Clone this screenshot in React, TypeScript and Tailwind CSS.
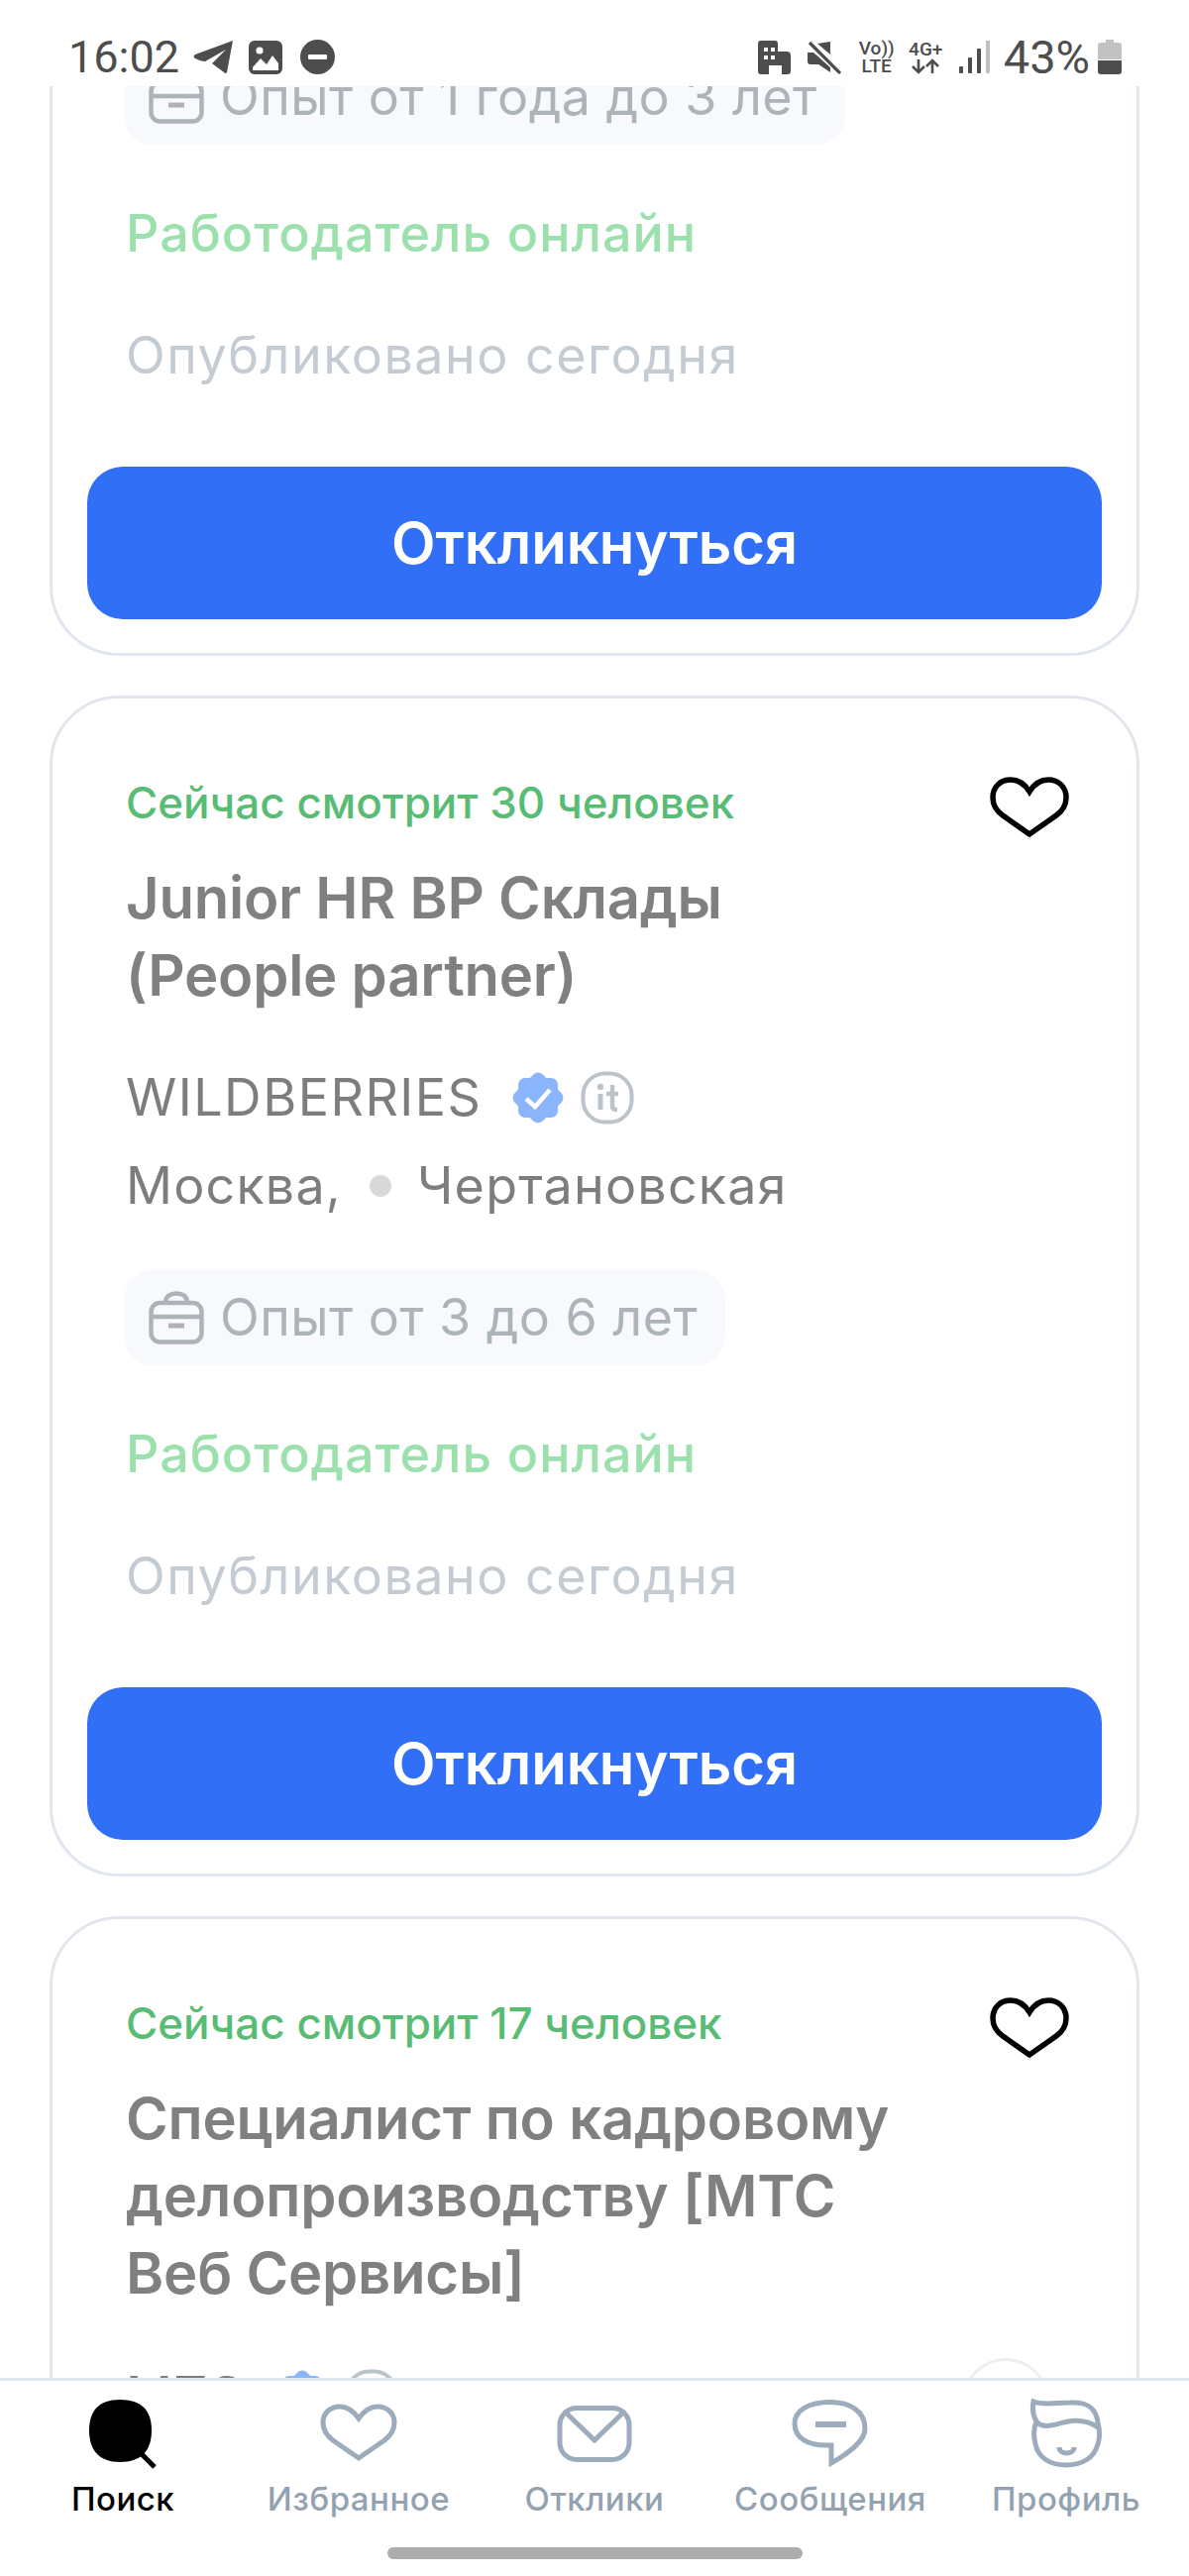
import React from "react";

const FONT = { fontFamily: "Inter, 'Noto Sans', sans-serif" };

function CardHeart() {
  return (
    <svg viewBox="0 0 80 72" className="absolute top-[73px] right-[68px] w-[80px] h-[72px]" fill="none" stroke="#000" strokeWidth="5.5" strokeLinejoin="miter">
      <path d="M40 64 L13 45 C6 40 3 34 3 27 C3 16 11 9 21 9 C29 9 35 13 40 21 C45 13 51 9 59 9 C69 9 77 16 77 27 C77 34 74 40 67 45 Z" />
    </svg>
  );
}

function Verified() {
  return (
    <svg viewBox="0 0 58 58" className="w-[58px] h-[58px] shrink-0">
      <g fill="#8ab4fb">
        <rect x="9" y="9" width="40" height="40" rx="7" />
        <rect x="9" y="9" width="40" height="40" rx="7" transform="rotate(45 29 29)" />
      </g>
      <path d="M17 30 L26 38 L41 21" fill="none" stroke="#fff" strokeWidth="4.5" />
    </svg>
  );
}

function ItBadge() {
  return (
    <svg viewBox="0 0 54 54" className="w-[54px] h-[54px] shrink-0" fill="none">
      <rect x="2.5" y="2.5" width="49" height="49" rx="22" stroke="#bcc3c9" strokeWidth="4" />
      <circle cx="20" cy="16" r="3.2" fill="#bcc3c9" />
      <path d="M20 23 V39" stroke="#bcc3c9" strokeWidth="5" />
      <path d="M32 14 V36 Q32 39 37 39 M26 23 H38" stroke="#bcc3c9" strokeWidth="4.5" />
    </svg>
  );
}

function Bag() {
  return (
    <svg viewBox="0 0 56 54" className="w-[56px] h-[54px] shrink-0" fill="none" stroke="#adb4b9" strokeWidth="4.5">
      <rect x="2.5" y="12" width="51" height="39.5" rx="9" />
      <path d="M3 26 H53" />
      <path d="M17 12 C17 5 22 2.5 28 2.5 C34 2.5 39 5 39 12" />
      <path d="M20 35 H36" strokeWidth="5" />
    </svg>
  );
}

function CompanyRow({ company, logo }: { company: string; logo?: boolean }) {
  return (
    <div className="relative mt-[41px] h-[88px] flex items-center text-[#7d7d7d] text-[52px] tracking-[1.5px]">
      <span>{company}</span>
      <span className="ml-[28px]"><Verified /></span>
      <span className="ml-[14px]"><ItBadge /></span>
      {logo && <div className="absolute right-[14px] top-[6px] w-[88px] h-[88px] rounded-full border-[3px] border-[#eeeeee]" />}
    </div>
  );
}

function Tail({ exp }: { exp: string }) {
  return (
    <>
      <div className="px-[39px]">
        <div className="-ml-[2px] inline-flex items-center h-[96px] pl-[25px] pr-[28px] rounded-[30px] bg-[#f7f9fd] text-[#adb4b9] text-[52px] tracking-[0.45px] gap-[16px]">
          <Bag />
          <span>{exp}</span>
        </div>
        <div className="mt-[55px] h-[70px] flex items-center text-[#9ce0ae] text-[52px] font-medium tracking-[1px]">Работодатель онлайн</div>
        <div className="mt-[53px] h-[70px] flex items-center text-[#c5cbd2] text-[52px] tracking-[1.5px]">Опубликовано сегодня</div>
      </div>
      <button className="mt-[77px] w-full h-[154px] rounded-[36px] bg-[#316ff6] text-white text-[58px] font-semibold">Откликнуться</button>
    </>
  );
}

function Head({ viewers, title }: { viewers: string; title: string[] }) {
  return (
    <>
      <CardHeart />
      <div className="h-[60px] flex items-center text-[#59bc74] text-[44px] font-medium">{viewers}</div>
      <div className="mt-[27px] text-[#808080] text-[58px] leading-[78px] font-semibold tracking-[-0.2px]">
        {title.map((t) => (
          <div key={t} className="whitespace-nowrap">{t}</div>
        ))}
      </div>
    </>
  );
}

function StatusBar() {
  return (
    <div className="h-[87px] shrink-0 bg-white flex items-start justify-between pl-[69px] pr-[68px] pt-[40px] text-[#4d4d4d]">
      <div className="flex items-center h-[35px]">
        <span className="text-[45px] leading-none" style={{ fontFamily: "Roboto, sans-serif" }}>16:02</span>
        <svg viewBox="0 0 40 35" className="ml-[14px] w-[40px] h-[35px]" fill="#4d4d4d">
          <path d="M40 1 L34 33 Q33 35 31 33 L19 24 L33 10 L12 22 Q8 22 2 19 Q-1 17 2 15 Z" />
        </svg>
        <svg viewBox="0 0 34 34" className="ml-[16px] w-[34px] h-[34px]">
          <rect width="34" height="34" rx="6" fill="#4d4d4d" />
          <circle cx="11" cy="10" r="3.6" fill="#fff" />
          <path d="M4 27 L12 18 L18 24 L24 15 L30 23 V30 H4 Z" fill="#fff" />
        </svg>
        <svg viewBox="0 0 35 35" className="ml-[18px] w-[35px] h-[35px]">
          <circle cx="17.5" cy="17.5" r="17.5" fill="#4d4d4d" />
          <rect x="8" y="15" width="19" height="5" rx="1" fill="#fff" />
        </svg>
      </div>
      <div className="flex items-center h-[35px]">
        <svg viewBox="0 0 33 34" className="w-[33px] h-[34px]" fill="#4d4d4d">
          <path d="M3 0 H17 Q20 0 20 3 V11 H29 Q33 11 33 15 V31 Q33 34 30 34 H24 V25 H11 V34 H3 Q0 34 0 31 V3 Q0 0 3 0 Z" />
          <g fill="#fff">
            <rect x="6" y="7" width="4" height="4" />
            <rect x="13" y="7" width="4" height="4" />
            <rect x="6" y="15" width="4" height="4" />
            <rect x="13" y="15" width="4" height="4" />
          </g>
        </svg>
        <svg viewBox="0 0 34 34" className="ml-[17px] w-[34px] h-[34px]" fill="#4d4d4d">
          <path d="M23 1 V14 L10 3 Z" />
          <path d="M0 12 H6 L23 27 V32 L11 24 H3 Q0 24 0 21 Z" />
          <path d="M2 2 L33 33" stroke="#4d4d4d" strokeWidth="3.2" />
        </svg>
        <div className="ml-[19px] w-[34px] flex flex-col items-center text-[19px] leading-[18px] font-medium" style={{ fontFamily: "Roboto, sans-serif" }}>
          <span>Vo))</span>
          <span>LTE</span>
        </div>
        <div className="ml-[14px] w-[37px] flex flex-col items-center">
          <span className="text-[19px] leading-[18px] font-medium" style={{ fontFamily: "Roboto, sans-serif" }}>4G+</span>
          <svg viewBox="0 0 32 16" className="w-[32px] h-[16px]" fill="none" stroke="#4d4d4d" strokeWidth="2.6">
            <path d="M9 1 V14 M3 8 L9 14 L15 8" />
            <path d="M23 15 V2 M17 8 L23 2 L29 8" />
          </svg>
        </div>
        <svg viewBox="0 0 32 34" className="ml-[14px] w-[32px] h-[34px]">
          <rect x="1" y="26" width="4" height="7" rx="1" fill="#4d4d4d" />
          <rect x="10" y="17" width="4" height="16" rx="1" fill="#4d4d4d" />
          <rect x="19" y="8" width="4" height="25" rx="1" fill="#4d4d4d" />
          <rect x="28" y="0" width="4" height="33" rx="1" fill="#bfbfbf" />
        </svg>
        <span className="ml-[14px] text-[47px] leading-none" style={{ fontFamily: "Roboto, sans-serif" }}>43%</span>
        <svg viewBox="0 0 24 35" className="ml-[8px] w-[24px] h-[35px]">
          <path d="M8 0 H16 V3 H21 Q24 3 24 6 V20 H0 V6 Q0 3 3 3 H8 Z" fill="#c2c2c2" />
          <path d="M0 21 H24 V32 Q24 35 21 35 H3 Q0 35 0 32 Z" fill="#4d4d4d" />
        </svg>
      </div>
    </div>
  );
}

const tabs = [
  {
    label: "Поиск",
    active: true,
    icon: (
      <>
        <path d="M37 1 C59 1 69 12 69 32 C69 52 59 64 37 64 C16 64 6 52 6 32 C6 12 16 1 37 1Z" fill="#000" stroke="none" />
        <path d="M58 55 L72 69" stroke="#000" strokeWidth="5" />
      </>
    ),
  },
  {
    label: "Избранное",
    icon: <path d="M40 60 L14 42 C6 36 4 30 4 24 C4 14 12 8 21 8 C29 8 35 13 40 20 C45 13 51 8 59 8 C68 8 76 14 76 24 C76 30 74 36 66 42 Z" />,
  },
  {
    label: "Отклики",
    icon: (
      <>
        <rect x="5" y="9.5" width="70" height="52" rx="17" />
        <path d="M11 14 L40 42 L69 14" />
      </>
    ),
  },
  {
    label: "Сообщения",
    icon: (
      <>
        <path d="M40 3.5 C60 3.5 75 13 75 30 C75 42 62 53 41 65 L41 47 L36 47 C17 47 4 40 4 25 C4 12 18 3.5 40 3.5Z" />
        <path d="M25 26 H56" strokeWidth="6" />
      </>
    ),
  },
  {
    label: "Профиль",
    icon: (
      <>
        <path d="M7 3 C16 7 30 4 44 4 C60 3 70 8 72 24 C74 32 74 40 72 46 C68 60 56 67 40 67 C24 67 12 60 9 46 C7 38 7 30 10 23 C6 16 6 8 7 3Z" />
        <path d="M10 23 C14 29 22 28 30 26 C40 23 56 18 72 29" />
        <path d="M33 49 C33 57 48 57 48 49" />
      </>
    ),
  },
];

function TabBar() {
  return (
    <div className="h-[200px] shrink-0 bg-white border-t-[3px] border-[#e1e6ed] flex flex-col items-center">
      <div className="w-full grid grid-cols-5 px-[5px] pt-[18px]">
        {tabs.map((t) => (
          <div key={t.label} className="flex flex-col items-center">
            <svg viewBox="0 0 80 72" className="w-[80px] h-[72px]" fill="none" stroke="#9dacbc" strokeWidth="5">
              {t.icon}
            </svg>
            <span className={`h-[60px] flex items-center text-[33px] font-medium tracking-[0.5px] ${t.active ? "text-black" : "text-[#93a2b1]"}`}>{t.label}</span>
          </div>
        ))}
      </div>
      <div className="mt-auto mb-[17px] w-[419px] h-[12px] rounded-full bg-[#adadad]" />
    </div>
  );
}

export default function App() {
  const frame = "relative bg-white border-[3px] border-[#e1e6ee] rounded-[70px] px-[35px] pb-[34px]";
  return (
    <div className="w-[1200px] h-[2600px] flex flex-col bg-white overflow-hidden" style={FONT}>
      <StatusBar />
      <div className="flex-1 min-h-0 overflow-hidden px-[50px]">
        <div className="-mt-[37px] flex flex-col gap-[40px]">
          <div className={`${frame} border-t-0 rounded-t-none`}>
            <Tail exp="Опыт от 1 года до 3 лет" />
          </div>
          <div className={`${frame} pt-[75px]`}>
            <div className="px-[39px]">
              <Head viewers="Сейчас смотрит 30 человек" title={["Junior HR BP Склады", "(People partner)"]} />
              <CompanyRow company="WILDBERRIES" />
              <div className="h-[89px] flex items-center text-[#7d7d7d] text-[52px] tracking-[1.2px]">
                <span>Москва,</span>
                <span className="ml-[28px] mr-[26px] w-[22px] h-[22px] rounded-full bg-[#d9d9d9]" />
                <span>Чертановская</span>
              </div>
              <div className="h-[41px]" />
            </div>
            <Tail exp="Опыт от 3 до 6 лет" />
          </div>
          <div className={`${frame} pt-[75px]`}>
            <div className="px-[39px]">
              <Head viewers="Сейчас смотрит 17 человек" title={["Специалист по кадровому", "делопроизводству [МТС", "Веб Сервисы]"]} />
              <CompanyRow company="МТС" logo />
            </div>
          </div>
        </div>
      </div>
      <TabBar />
    </div>
  );
}
